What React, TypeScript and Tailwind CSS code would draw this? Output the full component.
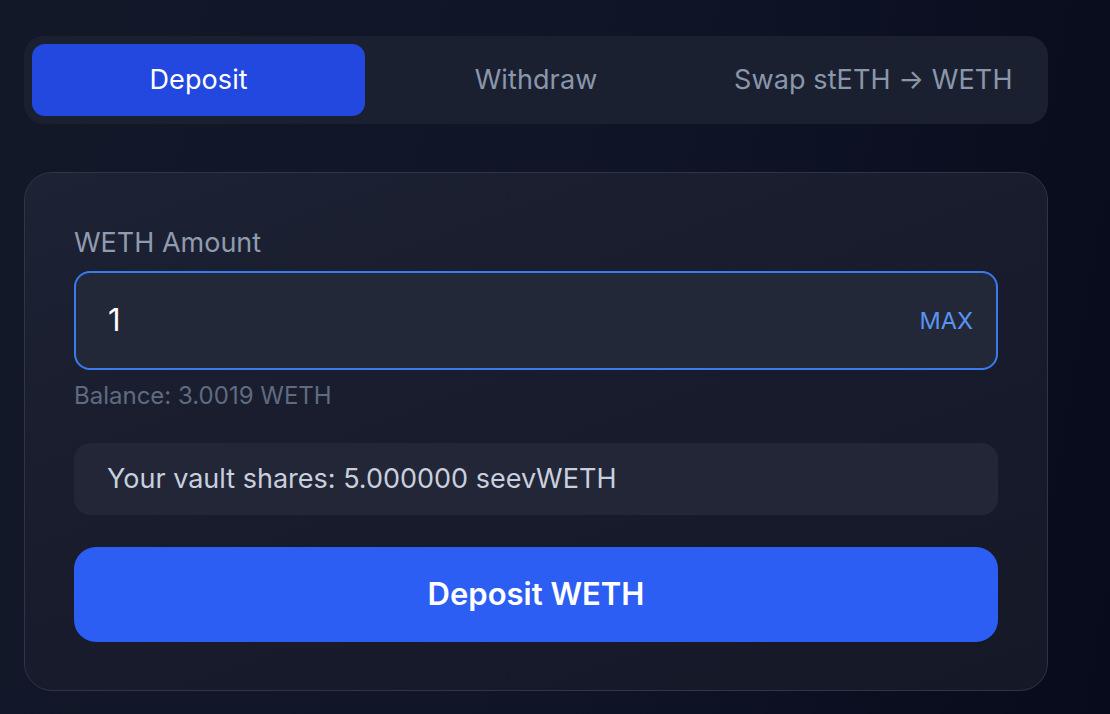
import React from "react";

export default function App() {
  return (
    <div
      className="w-[1110px] h-[714px] overflow-hidden bg-[linear-gradient(100deg,#131829_0%,#0f1427_55%,#070b1b_100%)]"
      style={{ fontFamily: "Inter, 'Noto Sans', sans-serif" }}
    >
      <div className="w-[1024px] ml-[24px] pt-[36px] flex flex-col gap-[48px]">
        <div className="h-[88px] rounded-[20px] bg-[#1b2031] p-[8px] grid grid-cols-3 gap-[4px]">
          <button className="rounded-[13px] bg-[#2348df] text-white text-[27px] tracking-[0.1px]">Deposit</button>
          <button className="rounded-[13px] text-[#8a97ab] text-[27px] tracking-[0.1px]">Withdraw</button>
          <button className="rounded-[13px] text-[#8a97ab] text-[27px] tracking-[0.1px]">Swap stETH → WETH</button>
        </div>
        <div className="h-[519px] rounded-[28px] border border-[#2f3446] bg-[linear-gradient(160deg,#1d2234_0%,#171b2b_55%,#141827_100%)] px-[49px] pt-[50px] flex flex-col">
          <div className="text-[27px] leading-[40px] text-[#8f9bb0]">WETH Amount</div>
          <div className="mt-[8px] h-[99px] rounded-[16px] border-2 border-[#3b7bf0] bg-[#232839] flex items-center justify-between pl-[32px] pr-[23px]">
            <span className="text-[31px] text-white">1</span>
            <span className="text-[23.5px] text-[#5b94f0]">MAX</span>
          </div>
          <div className="mt-[10px] text-[24px] leading-[32px] text-[#5f6b80]">Balance: 3.0019 WETH</div>
          <div className="mt-[31px] h-[72px] rounded-[16px] bg-[#222637] flex items-center px-[33px] text-[27px] text-[#c8d0de]">
            Your vault shares: 5.000000 seevWETH
          </div>
          <button className="mt-[32px] h-[95px] rounded-[22px] bg-[#2d5ef3] text-white text-[31px] font-semibold">
            Deposit WETH
          </button>
        </div>
      </div>
    </div>
  );
}
